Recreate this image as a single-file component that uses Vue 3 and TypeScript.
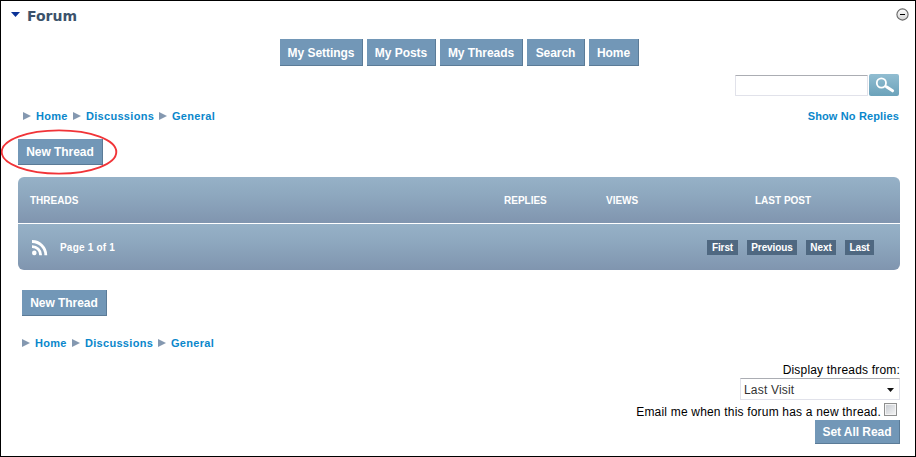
<script setup lang="ts">
import { ref } from 'vue'

const nav: { label: string; width: number }[] = [
  { label: 'My Settings', width: 83 },
  { label: 'My Posts', width: 69 },
  { label: 'My Threads', width: 83 },
  { label: 'Search', width: 58 },
  { label: 'Home', width: 50 },
]
const crumbs: { label: string; width: number }[] = [
  { label: 'Home', width: 37 },
  { label: 'Discussions', width: 73 },
  { label: 'General', width: 44 },
]
const pages: { label: string; width: number }[] = [
  { label: 'First', width: 31 },
  { label: 'Previous', width: 50 },
  { label: 'Next', width: 30 },
  { label: 'Last', width: 29 },
]
const query = ref('')
const notify = ref(false)
</script>

<template>
  <main class="frame">
    <header class="title-bar">
      <svg class="caret" width="9" height="5" viewBox="0 0 9 5"><path d="M0 0H9L4.5 5Z" fill="#0a3296" /></svg>
      <h1>Forum</h1>
      <svg class="collapse" width="13" height="13" viewBox="0 0 13 13">
        <defs>
          <linearGradient id="knob" x1="0" y1="0" x2="0" y2="1">
            <stop offset="0" stop-color="#fff" /><stop offset="1" stop-color="#d2d2d2" />
          </linearGradient>
        </defs>
        <circle cx="6.5" cy="6.5" r="5.6" fill="url(#knob)" stroke="#666" stroke-width="1.1" />
        <path d="M4 6.5H9" stroke="#000" />
      </svg>
    </header>

    <nav class="nav">
      <button v-for="n in nav" :key="n.label" class="btn" :style="{ width: n.width + 'px' }">{{ n.label }}</button>
    </nav>

    <form class="search" @submit.prevent>
      <input v-model="query" type="text" aria-label="Search" />
      <button class="search-btn" aria-label="Search">
        <svg width="30" height="22" viewBox="0 0 30 22" fill="none" stroke="#fff">
          <circle cx="12.4" cy="9" r="4.6" stroke-width="1.8" />
          <path d="M16.2 11.9L18 13.2" stroke-width="2" />
          <path d="M17.8 13.1L23.6 16.8" stroke-width="3" stroke-linecap="round" />
        </svg>
      </button>
    </form>

    <div class="crumb-row">
      <div class="crumbs">
        <template v-for="c in crumbs" :key="c.label">
          <svg width="8" height="8" viewBox="0 0 8 8"><path d="M0 0L8 4L0 8Z" fill="#8498b0" /></svg>
          <a :style="{ width: c.width + 'px' }">{{ c.label }}</a>
        </template>
      </div>
      <a class="no-replies">Show No Replies</a>
    </div>

    <div class="new-top">
      <button class="btn new">New Thread</button>
      <svg class="ring" width="118" height="48" viewBox="0 0 118 48">
        <ellipse cx="59" cy="24" rx="57.3" ry="21.6" fill="none" stroke="#f13438" stroke-width="1.9" />
      </svg>
    </div>

    <section class="threads">
      <div class="head">
        <span>THREADS</span><span>REPLIES</span><span>VIEWS</span><span class="last">LAST POST</span>
      </div>
      <div class="foot">
        <svg class="rss" width="16" height="16" viewBox="0 0 16 16" fill="none" stroke="#fff" stroke-width="2.8">
          <circle cx="2.3" cy="12.9" r="2.3" fill="#fff" stroke="none" />
          <path d="M0 6.6A8.4 8.4 0 0 1 8.6 15.2M0 1.5A13.6 13.6 0 0 1 13.8 15.2" />
        </svg>
        <span class="page">Page 1 of 1</span>
        <div class="pager">
          <a v-for="p in pages" :key="p.label" :style="{ width: p.width + 'px' }">{{ p.label }}</a>
        </div>
      </div>
    </section>

    <button class="btn new bottom">New Thread</button>

    <div class="crumbs lower">
      <template v-for="c in crumbs" :key="c.label">
        <svg width="8" height="8" viewBox="0 0 8 8"><path d="M0 0L8 4L0 8Z" fill="#8498b0" /></svg>
        <a :style="{ width: c.width + 'px' }">{{ c.label }}</a>
      </template>
    </div>

    <div class="options">
      <label class="display">Display threads from:</label>
      <div class="select">
        <span>Last Visit</span>
        <svg width="7" height="4" viewBox="0 0 7 4"><path d="M0 0H7L3.5 4Z" fill="#111" /></svg>
      </div>
      <label class="email">
        <span>Email me when this forum has a new thread.</span>
        <input v-model="notify" type="checkbox" />
      </label>
      <button class="btn set-read">Set All Read</button>
    </div>
  </main>
</template>

<style>
body {
  margin: 0;
  background: #fff;
}
</style>

<style scoped>
* {
  box-sizing: border-box;
}
.frame {
  display: flex;
  flex-direction: column;
  width: 916px;
  height: 457px;
  border: 1px solid #000;
  overflow: hidden;
  font: 12px/14px "Liberation Sans", Arial, sans-serif;
  color: #000;
}
.title-bar {
  display: flex;
  height: 38px;
  padding: 0 6px 0 10px;
}
.caret {
  margin-top: 11px;
}
h1 {
  margin: 7px auto 0 7px;
  font: bold 14px/16px "DejaVu Sans", sans-serif;
  color: #3b526b;
}
.collapse {
  margin-top: 7px;
}
.nav {
  display: flex;
  gap: 4px;
  padding-left: 279px;
}
.btn {
  height: 27px;
  padding: 1px 0 0;
  border: solid #5b7b97;
  border-width: 0 1px 1px 0;
  background: #7297b7;
  color: #fff;
  font: bold 12px/14px "Liberation Sans", Arial, sans-serif;
  letter-spacing: -0.05px;
  white-space: nowrap;
}
.search {
  display: flex;
  gap: 1px;
  height: 22px;
  margin: 8px 16px 0 0;
  justify-content: flex-end;
}
.search input {
  width: 133px;
  height: 21px;
  margin: 1px 0 0;
  padding: 0 3px;
  border: 1px solid #e1e2ea;
  border-top-color: #abadb3;
  border-radius: 1px;
  background: #fff;
  outline: none;
}
.search-btn {
  width: 30px;
  height: 22px;
  padding: 0;
  border: 0;
  border-radius: 2px;
  background: linear-gradient(#91bdd1, #6ba2ba);
}
.search-btn svg {
  display: block;
}
.crumb-row {
  display: flex;
  justify-content: space-between;
  height: 14px;
  margin: 13px 16px 0 22px;
}
.crumbs {
  display: flex;
  align-items: center;
  height: 14px;
}
.crumbs a,
.no-replies {
  font-size: 11px;
  font-weight: bold;
  letter-spacing: 0.3px;
  color: #0a87cb;
  white-space: nowrap;
}
.crumbs a {
  margin-left: 5px;
}
.no-replies {
  letter-spacing: 0.14px;
}
.new-top {
  position: relative;
  height: 26px;
  margin: 16px 0 0 17px;
}
.btn.new {
  display: block;
  width: 85px;
  height: 26px;
  padding-top: 0;
}
.ring {
  position: absolute;
  left: -18px;
  top: -11px;
}
.threads {
  display: flex;
  flex-direction: column;
  gap: 1px;
  flex: none;
  width: 882px;
  margin: 12px 0 0 17px;
  border-radius: 6px;
  overflow: hidden;
  color: #fff;
  font-size: 10px;
  font-weight: bold;
}
.head,
.foot {
  height: 46px;
  background: linear-gradient(#96b1c7, #8ea8bf 38%, #8095af);
}
.head {
  display: grid;
  grid-template-columns: 474px 102px 149px 1fr;
  align-items: center;
  padding: 2px 0 0 12px;
}
.foot {
  display: flex;
  align-items: center;
}
.rss {
  margin: 2px 12px 0 14px;
}
.page {
  padding-top: 2px;
  letter-spacing: 0.2px;
}
.pager {
  display: flex;
  gap: 9px;
  margin: 1px 26px 0 auto;
}
.pager a {
  height: 15px;
  background: #4f6881;
  letter-spacing: -0.1px;
  line-height: 15px;
  text-align: center;
}
.bottom {
  flex: none;
  margin: 20px 0 0 21px;
}
.lower {
  margin: 20px 0 0 21px;
}
.options {
  display: flex;
  flex-direction: column;
  align-items: flex-end;
  margin: 13px 15px 0 0;
}
.display,
.select,
.email {
  letter-spacing: 0.19px;
}
.display {
  height: 14px;
}
.select {
  display: flex;
  align-items: center;
  justify-content: space-between;
  width: 160px;
  height: 22px;
  margin-top: 1px;
  padding: 1px 5px 0 3px;
  border: 1px solid #e1e2ea;
  border-top-color: #abadb3;
  color: #333;
}
.email {
  display: flex;
  gap: 3px;
  height: 17px;
  margin: 3px 3px 0 0;
}
.email span {
  padding-top: 2px;
}
.email input {
  appearance: none;
  width: 13px;
  height: 13px;
  margin: 0;
  border: 1px solid #8e8f8f;
  outline: 1px solid #f4f4f4;
  outline-offset: -2px;
  background: linear-gradient(135deg, #c5c9cf, #f6f6f6);
}
.set-read {
  width: 85px;
  height: 24px;
}
</style>
